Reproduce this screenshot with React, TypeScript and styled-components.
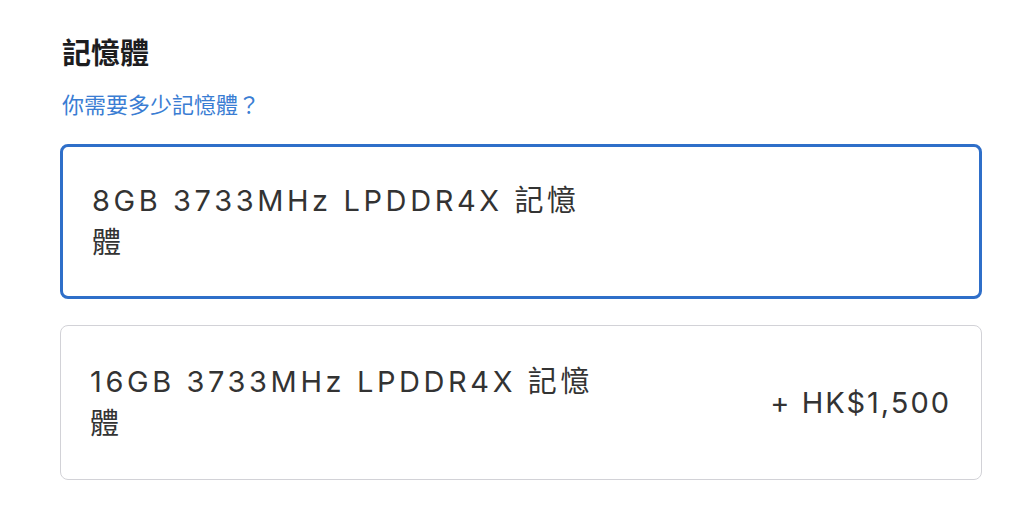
import React from 'react';
import styled, { createGlobalStyle } from 'styled-components';

const GlobalStyle = createGlobalStyle`
	html, body {
		margin: 0;
		padding: 0;
		background: #fff;
	}
	body {
		font-family: Inter, 'Noto Sans CJK TC', sans-serif;
		color: #1d1d1f;
	}
`;

const options = [
	{ id: '8gb', label: '8GB 3733MHz LPDDR4X 記憶體', price: '', selected: true },
	{ id: '16gb', label: '16GB 3733MHz LPDDR4X 記憶體', price: '+ HK$1,500', selected: false },
];

const App = () => {
	return (
		<React.Fragment>
			<GlobalStyle />
			<Section>
				<Title>記憶體</Title>
				<HelpLink href="#">你需要多少記憶體？</HelpLink>
				<OptionList>
					{options.map((o) => (
						<OptionCard key={o.id} $selected={o.selected}>
							<OptionLabel>{o.label}</OptionLabel>
							{o.price && <Price>{o.price}</Price>}
						</OptionCard>
					))}
				</OptionList>
			</Section>
		</React.Fragment>
	);
};

export default App;

const Section = styled.section`
	width: 922px;
	padding: 34px 0 0 60px;
`;

const Title = styled.h2`
	margin: 0 0 0 2px;
	font-size: 29px;
	line-height: 40px;
	font-weight: 700;
	color: #1d1d1f;
`;

const HelpLink = styled.a`
	display: block;
	margin: 16px 0 0 2px;
	font-size: 22px;
	line-height: 30px;
	color: #3a7dd3;
	text-decoration: none;
`;

const OptionList = styled.div`
	display: flex;
	flex-direction: column;
	gap: 26px;
	margin-top: 24px;
`;

const OptionCard = styled.div<{ $selected: boolean }>`
	box-sizing: border-box;
	display: flex;
	align-items: center;
	justify-content: space-between;
	height: 155px;
	padding: 0 30px 0 29px;
	border: ${(p) => (p.$selected ? '3px solid #2f6fc9' : '1px solid #d2d2d7')};
	border-radius: 8px;
	background: #fff;
`;

const OptionLabel = styled.div`
	max-width: 510px;
	font-size: 29px;
	line-height: 42px;
	letter-spacing: 3.6px;
	color: #333;
`;

const Price = styled.div`
	font-size: 29px;
	line-height: 42px;
	letter-spacing: 2px;
	color: #333;
`;
